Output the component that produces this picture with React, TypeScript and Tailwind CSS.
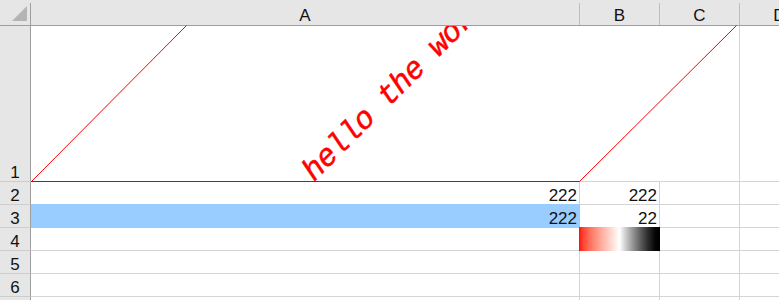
import React from "react";

function RowHead({ n }: { n: number }) {
  return (
    <div className="w-[31px] shrink-0 bg-[#e6e6e6] border-r border-b border-r-[#9e9e9e] border-b-[#cdcdcd] flex items-end justify-center leading-[17px]">
      <span>{n}</span>
    </div>
  );
}

function Cell({ w, children }: { w: string; children?: React.ReactNode }) {
  return (
    <div className={`${w} shrink-0 relative border-r border-b border-[#d4d4d4] flex items-end justify-end pr-[2px] leading-[17px]`}>
      {children}
    </div>
  );
}

export default function App() {
  return (
    <div className="w-[779px] h-[300px] overflow-hidden bg-white text-[17px] text-[#111111] [font-family:'Liberation_Sans',Arial,sans-serif]">
      {/* column header */}
      <div className="flex h-[26px] w-[900px] bg-[#e6e6e6] border-b border-[#9e9e9e]">
        <div className="w-[31px] shrink-0 pt-[3px]">
          <div className="h-full border-r border-[#9e9e9e]">
            <svg width="30" height="22" className="block">
              <polygon points="12,18 27,18 27,3" fill="#b4b4b4" />
            </svg>
          </div>
        </div>
        {[
          ["A", "w-[549px]"],
          ["B", "w-[80px]"],
          ["C", "w-[80px]"],
          ["D", "w-[80px]"],
        ].map(([l, w]) => (
          <div key={l} className={`${w} shrink-0 pt-[3px]`}>
            <div className="h-full border-r border-[#bdbdbd] flex items-end justify-center pb-px leading-[17px]">
              {l}
            </div>
          </div>
        ))}
      </div>

      {/* row 1 */}
      <div className="flex h-[156px] w-[900px]">
        <RowHead n={1} />
        <div className="w-[709px] shrink-0 relative border-r border-b border-[#d4d4d4]">
          <div className="absolute inset-0 overflow-hidden">
            <div className="absolute left-[288px] top-[161px] w-0 h-0">
              <div className="absolute left-0 bottom-0 origin-bottom-left -rotate-45 whitespace-nowrap italic text-[31px] tracking-[-1px] leading-none text-[#ff0000] [-webkit-text-stroke:0.5px_#ff0000] [font-family:'Liberation_Mono','Courier_New',monospace]">
                hello the world
              </div>
            </div>
          </div>
          <svg
            className="absolute left-0 top-0 overflow-visible"
            width="708"
            height="156"
          >
            <line x1="0.5" y1="155.5" x2="155.5" y2="-0.5" stroke="#ff0000" strokeWidth="1" />
            <line x1="0" y1="155.5" x2="548.5" y2="155.5" stroke="#e00000" strokeWidth="1" />
            <line x1="548.5" y1="155.5" x2="705.5" y2="-0.5" stroke="#ff0000" strokeWidth="1" />
          </svg>
        </div>
        <Cell w="w-[80px]" />
      </div>

      {/* row 2 */}
      <div className="flex h-[23px] w-[900px]">
        <RowHead n={2} />
        <Cell w="w-[549px]">
          <span>222</span>
        </Cell>
        <Cell w="w-[80px]">
          <span>222</span>
        </Cell>
        <Cell w="w-[80px]" />
        <Cell w="w-[80px]" />
      </div>

      {/* row 3 */}
      <div className="flex h-[23px] w-[900px]">
        <RowHead n={3} />
        <Cell w="w-[549px]">
          <div className="absolute -top-px left-0 -right-px -bottom-px bg-[#99ccff]" />
          <span className="relative">222</span>
        </Cell>
        <Cell w="w-[80px]">
          <span>22</span>
        </Cell>
        <Cell w="w-[80px]" />
        <Cell w="w-[80px]" />
      </div>

      {/* row 4 */}
      <div className="flex h-[23px] w-[900px]">
        <RowHead n={4} />
        <Cell w="w-[549px]" />
        <Cell w="w-[80px]">
          <div className="absolute -top-px -left-px -right-px -bottom-px bg-linear-to-r from-[#ff0000] via-[#ffffff] to-[#000000]" />
        </Cell>
        <Cell w="w-[80px]" />
        <Cell w="w-[80px]" />
      </div>

      {[5, 6, 7].map((n) => (
        <div key={n} className="flex h-[23px] w-[900px]">
          <RowHead n={n} />
          <Cell w="w-[549px]" />
          <Cell w="w-[80px]" />
          <Cell w="w-[80px]" />
          <Cell w="w-[80px]" />
        </div>
      ))}
    </div>
  );
}
